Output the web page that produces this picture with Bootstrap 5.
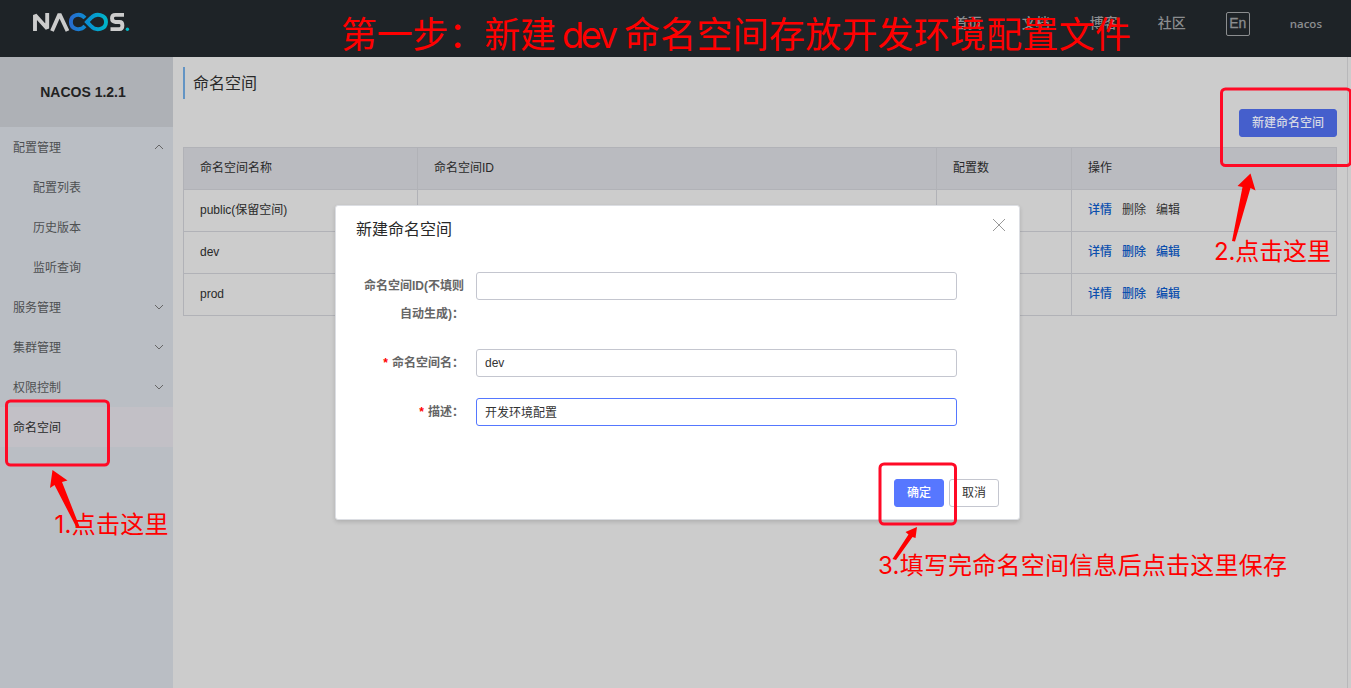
<!DOCTYPE html>
<html lang="zh-CN">
<head>
<meta charset="utf-8">
<title>Nacos</title>
<link href="https://cdn.jsdelivr.net/npm/bootstrap@5.3.0/dist/css/bootstrap.min.css" rel="stylesheet">
<style>
body{font-family:"Liberation Sans","Noto Sans CJK SC",sans-serif;font-size:12px;line-height:20px;color:#292929;background:#ccc;height:688px;overflow:hidden}
.topbar{height:57px;background:#1e2327;color:#8b8d8f;font-size:14px;padding:0 29px 10px 32px}
.topbar nav{gap:40px}
.topbar a{color:inherit;text-decoration:none;font-weight:500;line-height:22px;padding-bottom:2px}
.topbar svg{margin-top:-3px}
.topbar .lang{border:1px solid #8b8d8f;border-radius:2px;width:24px;height:24px;line-height:21px;text-align:center;padding:0;-webkit-text-stroke:.3px}
.topbar .user-name{font-size:11.5px;font-family:"Open Sans",sans-serif;font-weight:600;padding:0}
.side{width:173px;background:#babec4;color:#4e5052}
.side-title{height:70px;background:#aeb1b6;color:#222;font-weight:700;font-size:14px;padding-right:7px}
.side-item{height:40px;padding:1px 9px 0 13px}
.side-item svg{margin-top:-1px}
.side-sub{padding-left:33px}
.side-item.current{background:#c2c0c6;color:#292929}
.main{border-right:1px solid #b8b8ba;margin-right:3px;padding:10px 10px 0 10px}
.page-title{height:32px;border-left:2px solid #6394c4;padding-left:8px;font-size:16px;line-height:33px;margin:0;font-weight:400}
.toolbar{padding:10px 0}
.btn-flat{height:28px;padding:0 12px;font-size:12px;line-height:26px;border-radius:3px}
.btn-new{background:#455fcc;color:#d5d8e4;border:1px solid #455fcc;font-weight:500}
.ns-table{table-layout:fixed;width:1154px;border-collapse:collapse}
.ns-table th,.ns-table td{border:1px solid #b1b2b7;height:42px;padding:0 16px 2px;font-weight:400}
.ns-table th{background:#babbc0}
.ns-table a{color:#0b4fae;text-decoration:none;margin-right:10px;font-weight:500}
.ns-table a.off{color:#333;font-weight:400}
.dialog-box{position:absolute;left:335px;top:205px;width:685px;height:315px;background:#fff;border:1px solid #dcdee3;border-radius:3px;box-shadow:0 2px 4px rgba(0,0,0,.14);padding:12px 20px}
.dialog-title{font-size:16px;line-height:24px;height:22px;font-weight:400;margin:0}
.close-x{margin:0 -7px 0 0}
.fields{gap:21px;margin-top:32px}
.field-row{padding-right:42px}
.field-label{width:108px;text-align:right;font-weight:700;color:#666;line-height:28px}
.field-label i{color:#f00;font-style:normal;margin-right:4px}
.form-control{width:481px;height:28px;padding:0 8px 1px;font-size:12px;color:#333;border:1px solid #c4c6cf;border-radius:3px;box-shadow:none!important}
.form-control.on{border-color:#5577ff}
.btn-ok{background:#5777ff;color:#fff;border:1px solid #5777ff;font-weight:500;margin-right:5px}
.btn-cancel{background:#fff;color:#333;border:1px solid #c4c6cf}
.marks{position:absolute;inset:0;width:1351px;height:688px;pointer-events:none}
</style>
</head>
<body class="d-flex flex-column position-relative">
<header class="topbar d-flex align-items-center justify-content-between flex-shrink-0">
<svg width="98" height="20" viewBox="0 0 98 20" fill="none" stroke-width="3.9">
<defs><linearGradient id="ring" gradientUnits="userSpaceOnUse" x1="37" x2="76" y1="10" y2="10"><stop stop-color="#2b69cf"/><stop offset=".5" stop-color="#0791d2"/><stop offset="1" stop-color="#00b8c7"/></linearGradient></defs>
<path stroke="#ccc" stroke-linejoin="bevel" d="M3 19V3L15.200 16.500V1M20 19L27.500 2L35.500 19"/>
<path stroke="url(#ring)" d="M53 6C48 .5 38.900 2.500 38.900 10C38.900 17.500 48 19.500 53 14M55 10L59 6C64 .5 74 2.500 74 10C74 17.500 64 19.500 59 14Z"/>
<path stroke="#ccc" d="M92 2.900H83.500Q80 2.900 80 6.300T83.500 10H87.500Q90.400 10 90.400 13.500T87.500 17.100H78.500"/>
<circle cx="95.400" cy="17.200" r="1.700" fill="#00b8c7"/></svg>
<nav class="d-flex align-items-center">
<a href="#">首页</a><a href="#">文档</a><a href="#">博客</a><a href="#">社区</a><a class="lang" href="#">En</a><a class="user-name" href="#">nacos</a>
</nav>
</header>
<div class="d-flex flex-grow-1">
<aside class="side flex-shrink-0">
<div class="side-title d-flex align-items-center justify-content-center">NACOS 1.2.1</div>
<div class="side-item d-flex align-items-center justify-content-between">配置管理<svg width="10" height="6" fill="none" stroke="#666"><path d="M1 5L5 1L9 5"/></svg></div>
<div class="side-item side-sub d-flex align-items-center">配置列表</div>
<div class="side-item side-sub d-flex align-items-center">历史版本</div>
<div class="side-item side-sub d-flex align-items-center">监听查询</div>
<div class="side-item d-flex align-items-center justify-content-between">服务管理<svg width="10" height="6" fill="none" stroke="#666"><path d="M1 1L5 5L9 1"/></svg></div>
<div class="side-item d-flex align-items-center justify-content-between">集群管理<svg width="10" height="6" fill="none" stroke="#666"><path d="M1 1L5 5L9 1"/></svg></div>
<div class="side-item d-flex align-items-center justify-content-between">权限控制<svg width="10" height="6" fill="none" stroke="#666"><path d="M1 1L5 5L9 1"/></svg></div>
<div class="side-item current d-flex align-items-center">命名空间</div>
</aside>
<main class="main flex-grow-1">
<h1 class="page-title">命名空间</h1>
<div class="toolbar d-flex justify-content-end"><button class="btn btn-flat btn-new">新建命名空间</button></div>
<table class="ns-table">
<colgroup><col style="width:234px"><col style="width:519px"><col style="width:135px"><col></colgroup>
<thead><tr><th>命名空间名称</th><th>命名空间ID</th><th>配置数</th><th>操作</th></tr></thead>
<tbody>
<tr><td>public(保留空间)</td><td></td><td></td><td><a href="#">详情</a><a class="off">删除</a><a class="off">编辑</a></td></tr>
<tr><td>dev</td><td></td><td></td><td><a href="#">详情</a><a href="#">删除</a><a href="#">编辑</a></td></tr>
<tr><td>prod</td><td></td><td></td><td><a href="#">详情</a><a href="#">删除</a><a href="#">编辑</a></td></tr>
</tbody></table>
</main>
</div>
<section class="dialog-box d-flex flex-column" role="dialog">
<div class="d-flex justify-content-between"><h2 class="dialog-title">新建命名空间</h2><svg class="close-x" width="14" height="14" fill="none" stroke="#999"><path d="M1 1L13 13M13 1L1 13"/></svg></div>
<div class="fields d-flex flex-column">
<div class="field-row d-flex justify-content-between"><label class="field-label">命名空间ID(不填则<br>自动生成)：</label><input class="form-control"></div>
<div class="field-row d-flex justify-content-between"><label class="field-label"><i>*</i>命名空间名：</label><input class="form-control" value="dev"></div>
<div class="field-row d-flex justify-content-between"><label class="field-label"><i>*</i>描述：</label><input class="form-control on" value="开发环境配置"></div>
</div>
<div class="d-flex justify-content-end mt-auto"><button class="btn btn-flat btn-ok">确定</button><button class="btn btn-flat btn-cancel">取消</button></div>
</section>
<svg class="marks" viewBox="0 0 1351 688" fill="red">
<g fill="none" stroke="#ff0a26" stroke-width="3"><rect x="6.500" y="401" width="102" height="64" rx="4"/><rect x="1221.500" y="89" width="129" height="76.500" rx="4"/><rect x="880" y="464" width="75.500" height="60" rx="4"/></g>
<path d="M52.500 470L67.500 480.500L62 482L79.500 526.500L76.500 527.500L54.500 485L50 488Z"/>
<path d="M1250.500 173.500L1255.500 190.500L1250.500 188L1235 241.500L1232 241L1242.500 187L1237.500 186Z"/>
<path d="M917 527L915.500 538L912.500 537L896 560L892.500 559L908.500 534.500L905.500 532Z"/>
<g font-family="Inter,'Noto Sans CJK SC',sans-serif"><text y="48" font-size="36"><tspan x="341" textLength="215">第一步：新建</tspan><tspan x="562" textLength="56">dev</tspan><tspan x="624" textLength="507">命名空间存放开发环境配置文件</tspan></text>
<text x="54.500" y="533" font-size="24" textLength="114">1.点击这里</text><text x="1214" y="260" font-size="24" textLength="117">2.点击这里</text><text x="878" y="574" font-size="24" textLength="409">3.填写完命名空间信息后点击这里保存</text></g>
</svg>
<script src="https://cdn.jsdelivr.net/npm/bootstrap@5.3.0/dist/js/bootstrap.bundle.min.js"></script>
</body>
</html>
